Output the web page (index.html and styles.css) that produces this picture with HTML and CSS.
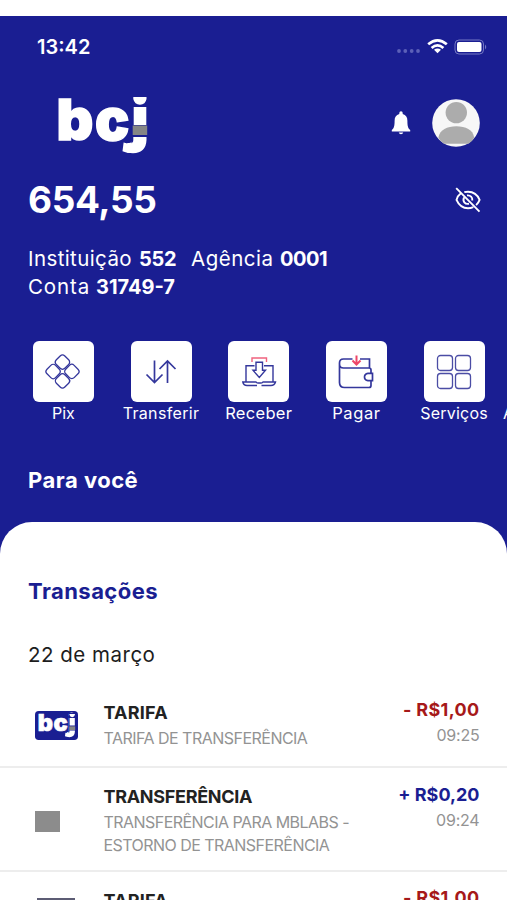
FILE: index.html
```html
<!DOCTYPE html>
<html lang="pt-BR">
<head>
<meta charset="utf-8">
<meta name="viewport" content="width=device-width, initial-scale=1">
<title>bcj</title>
<link rel="stylesheet" href="styles.css">
</head>
<body>
<main class="screen">
  <section class="hero">
    <div class="status">
      <span class="clock">13:42</span>
      <svg class="signals" width="92" height="18" viewBox="0 0 92 18" aria-hidden="true">
        <g fill="#5c60b8"><circle cx="4" cy="13" r="1.900"/><circle cx="10.300" cy="13" r="1.900"/><circle cx="16.700" cy="13" r="1.900"/><circle cx="23" cy="13" r="1.900"/></g>
        <g fill="none" stroke="#fff" stroke-width="2.700"><path d="M33.200 6.300Q42.500-1.700 51.800 6.300"/><path d="M36.600 9.900Q42.500 4.700 48.400 9.900"/></g>
        <path d="M39 11.800Q42.500 9.200 46 11.800L42.500 15.300z" fill="#fff"/>
        <rect x="60" y="2" width="28.500" height="14" rx="4" fill="none" stroke="#7478c4"/>
        <rect x="62" y="4" width="24.500" height="10" rx="2" fill="#fff"/>
        <path d="M90 6.500q2.500 2.500 0 5z" fill="#7478c4"/>
      </svg>
    </div>
    <div class="brand">
      <svg class="logo" width="100" height="70" viewBox="0 0 100 70">
        <text class="logo-text" y="51.500"><tspan x="6.500">b</tspan><tspan x="45">c</tspan><tspan x="80">j</tspan></text>
        <path d="M81.500 5H100V66H81.500z" fill="#1a1e92"/>
        <path d="M83.300 9H96.500V11Q95.500 16.500 90 16.800 84.500 16.500 83.300 11zM83.700 19H96.300V37H83.700zM83.300 49H96.500V52Q96 64.800 83 65.200 76.500 65.200 72.500 63.300L73.600 54.500Q77 55.800 79.800 55.600 83.300 55.300 83.300 52z" fill="#fff"/>
        <path d="M82.700 37.500H97.200V47H82.700z" fill="#858585"/>
      </svg>
      <div class="brand-actions">
        <svg width="20" height="24" viewBox="0 0 20 24" aria-hidden="true"><path d="M8.300 3V2a1.700 1.700 0 0 1 3.400 0v1c3.300.8 4.700 3.400 4.700 6.700 0 4.600.3 7.300 2.800 9.300v1.600H.8V19c2.500-2 2.800-4.700 2.800-9.300C3.600 6.400 5 3.800 8.300 3zM7.700 21.500h4.600q-.5 1.700-2.300 1.700t-2.300-1.700z" fill="#fff"/></svg>
        <svg width="48" height="48" viewBox="0 0 48 48" aria-hidden="true"><circle cx="24" cy="24" r="23.800" fill="#f7f7f7"/><circle cx="24.300" cy="13.600" r="10.700" fill="#acacac"/><path d="M6.500 39V38C8 31 15 27.300 24.300 27.300S41 31 42 38v1Q40 43 36.500 44.800H12Q8.500 43 6.500 39z" fill="#acacac"/></svg>
      </div>
    </div>
    <div class="balance">
      <strong class="balance-value">654,55</strong>
      <svg width="26" height="26" viewBox="0 0 26 26" fill="none" stroke="#fff" stroke-width="1.900" aria-hidden="true"><path d="M1.200 1.200 24.500 24.700M5.600 6.600Q2.500 9 1.500 12.900C4 18.500 8 21.300 13 21.300q2.600 0 5.300-1.100M9.300 5.200q1.700-.5 3.700-.5c5.500 0 9.500 3 11.600 8.100q-1.200 3.200-3.500 5.300M9 10.500c-1.700 3.800.9 7 5 6.300M12 8.400c3.500-.5 5.700 2 5.300 5.100"/></svg>
    </div>
    <div class="account">
      <div class="account-line"><span class="lbl-inst">Instituição</span><b class="val-inst">552</b><span class="lbl-ag">Agência</span><b class="val-ag">0001</b></div>
      <div class="account-line"><span class="lbl-conta">Conta</span><b class="val-conta">31749-7</b></div>
    </div>
    <nav class="actions">
      <div class="action"><span class="tile"><svg width="38" height="38" viewBox="0 0 38 38" fill="none" stroke="#34379c" stroke-width="1.300"><g transform="translate(18.500 18.500) rotate(45)"><rect x="-12.600" y="-12.600" width="12" height="12" rx="3.300"/><rect x=".6" y="-12.600" width="12" height="12" rx="3.300"/><rect x="-12.600" y=".6" width="12" height="12" rx="3.300"/><rect x=".6" y=".6" width="12" height="12" rx="3.300"/></g></svg></span><span class="action-label">Pix</span></div>
      <div class="action"><span class="tile"><svg width="38" height="38" viewBox="0 0 38 38" fill="none" stroke="#34379c" stroke-width="1.700"><path d="M12.500 7.500V29.500M4.500 21.500 12.500 29.500 20.500 21.500M25.500 30V8M17.500 16 25.500 8 33.500 16"/></svg></span><span class="action-label l-transfer">Transferir</span></div>
      <div class="action"><span class="tile"><svg width="38" height="38" viewBox="0 0 38 38" fill="none" stroke="#34379c" stroke-width="1.400"><path d="M12 9V5H26.500V9" stroke="#f0637f"/><path d="M14.500 12.700H6V29M24 12.700H33V29M16 9.200H22.500V17.300H25.500L19.300 24.500 13 17.300H16zM17 32.500H7Q3.500 32.500 2.800 29H16Q16.500 30 18 30H21Q22.500 30 23 29H35.500Q34.500 32.500 31 32.500H21.500"/></svg></span><span class="action-label l-receive">Receber</span></div>
      <div class="action"><span class="tile"><svg width="38" height="38" viewBox="0 0 38 38" fill="none" stroke="#34379c" stroke-width="1.700"><path d="M15.500 6H6.500Q2.500 6 2.500 10V29.500Q2.500 34.500 7.500 34.500H32Q34 34.500 34 32.500V27.700M34 20.300V17Q34 15 32 15H6.500Q2.500 15 2.500 11M23 6H32.500V15M35.500 20.300H31Q27.500 20.800 27.500 24T31 27.700H35.500z"/><path d="M19.500 2.500V11M15.500 7.500 19.500 11.500 23.500 7.500" stroke="#ee4668" stroke-width="2"/></svg></span><span class="action-label l-pay">Pagar</span></div>
      <div class="action"><span class="tile"><svg width="38" height="38" viewBox="0 0 38 38" fill="none" stroke="#4b4da5" stroke-width="1.300"><rect x="2.500" y="2.500" width="15" height="15" rx="3"/><rect x="20.500" y="2.500" width="15" height="15" rx="3"/><rect x="2.500" y="20.500" width="15" height="15" rx="3"/><rect x="20.500" y="20.500" width="15" height="15" rx="3"/></svg></span><span class="action-label l-services">Serviços</span></div>
      <div class="action action-next"><span class="action-label">A</span></div>
    </nav>
    <h2 class="for-you">Para você</h2>
  </section>
  <section class="sheet">
    <h2 class="sheet-title">Transações</h2>
    <p class="date">22 de março</p>
    <article class="row">
      <span class="row-icon"><svg class="logo" width="43" height="29" viewBox="0 2 104 70.100">
        <rect y="2" width="104" height="70.100" rx="9" fill="#1a1e92"/>
        <text class="logo-text" y="51.500"><tspan x="6.500">b</tspan><tspan x="45">c</tspan><tspan x="80">j</tspan></text>
        <path d="M81.500 6H100V66H81.500z" fill="#1a1e92"/>
        <path d="M83.300 9H96.500V11Q95.500 16.500 90 16.800 84.500 16.500 83.300 11zM83.700 19H96.300V37H83.700zM83.300 49H96.500V52Q96 64.800 83 65.200 76.500 65.200 72.500 63.300L73.600 54.500Q77 55.800 79.800 55.600 83.300 55.300 83.300 52z" fill="#fff"/>
        <path d="M82.700 39H97.200V48H82.700z" fill="#858585"/>
      </svg></span>
      <div class="row-body"><h3 class="t-tarifa">TARIFA</h3><p class="d-tarifa">TARIFA DE TRANSFERÊNCIA</p></div>
      <div class="row-side"><strong class="debit">- R$1,00</strong><time>09:25</time></div>
    </article>
    <article class="row row-tall">
      <span class="row-icon"><span class="placeholder"></span></span>
      <div class="row-body"><h3 class="t-transf">TRANSFERÊNCIA</h3><p class="d-para">TRANSFERÊNCIA PARA MBLABS -<br>ESTORNO DE TRANSFERÊNCIA</p></div>
      <div class="row-side"><strong class="credit">+ R$0,20</strong><time>09:24</time></div>
    </article>
    <article class="row">
      <span class="row-icon"><span class="card-thumb"></span></span>
      <div class="row-body"><h3 class="t-tarifa">TARIFA</h3></div>
      <div class="row-side"><strong class="debit">- R$1,00</strong></div>
    </article>
  </section>
</main>
</body>
</html>
```
FILE: styles.css
```css
* { box-sizing: border-box; }
body { margin: 0; background: #fff; }
h2, h3, p { margin: 0; }
svg { display: block; }
.screen {
  height: 900px;
  padding-top: 16px;
  overflow: hidden;
  background: linear-gradient(#fff 16px, #1a1e92 16px);
  font-family: Inter, "Liberation Sans", sans-serif;
  color: #fff;
  white-space: nowrap;
}
.logo { overflow: visible; }
.logo-text { font: 900 57px Inter, sans-serif; fill: #fff; stroke: #fff; stroke-width: 1.5px; }
.hero { height: 506px; padding: 16px 0 0 28px; }
.status { display: flex; align-items: center; justify-content: space-between; height: 30px; padding: 0 20px 0 9px; }
.clock { font-size: 20px; font-weight: 600; }
.brand { display: flex; align-items: center; justify-content: space-between; height: 70px; margin-top: 26px; padding: 0 27px 0 22px; }
.brand-actions { display: flex; align-items: center; gap: 21px; }
.balance { display: flex; align-items: center; justify-content: space-between; height: 40px; margin-top: 22px; padding-right: 26px; }
.balance-value { font-size: 37px; font-weight: 700; line-height: 40px; letter-spacing: -0.4px; }
.account { margin-top: 24.5px; font-size: 20px; }
.account-line { display: flex; height: 28.5px; line-height: 28.5px; }
.account-line span { font-size: 20.5px; }
.account-line b { margin-left: 7px; }
.lbl-inst { width: 104px; letter-spacing: 0.4px; }
.val-inst { width: 37px; letter-spacing: -0.3px; }
.lbl-ag { width: 82px; margin-left: 15px; letter-spacing: 0.5px; }
.val-ag { letter-spacing: -0.5px; }
.lbl-conta { width: 61px; letter-spacing: 0.9px; }
.actions { display: flex; margin: 39.5px 0 0 -13.5px; height: 83px; }
.action { display: flex; flex: 0 0 97.7px; flex-direction: column; align-items: center; }
.action-next { align-items: flex-start; padding-top: 61px; }
.tile { display: flex; align-items: center; justify-content: center; width: 61px; height: 61px; border-radius: 6px; background: #fff; }
.action-label { font-size: 16px; line-height: 22px; }
.l-transfer { letter-spacing: 0.35px; }
.l-receive { font-size: 16.5px; letter-spacing: 0.3px; }
.l-pay { font-size: 16.5px; letter-spacing: 0.6px; }
.l-services { letter-spacing: 0.2px; }
.for-you { margin-top: 42px; font-size: 22px; line-height: 29px; letter-spacing: 0.5px; }
.sheet { height: 400px; padding-top: 55px; border-radius: 32px 32px 0 0; background: #fff; }
.sheet-title { padding-left: 28px; color: #1a1e92; font-size: 22px; line-height: 29px; letter-spacing: 0.45px; }
.date { margin-top: 35px; padding-left: 28px; color: #1d1d1d; font-size: 20.5px; line-height: 28px; letter-spacing: 0.5px; }
.row { display: flex; height: 84px; border-bottom: 2px solid #ededed; padding: 0 27.5px 0 34.5px; }
.date + .row { margin-top: 15px; }
.row-tall { height: 104px; }
.row-icon { display: flex; align-items: center; flex: 0 0 69px; }
.row-tall .row-icon { padding-top: 4px; }
.row-body { flex: 1; padding-top: 16.5px; }
.row-body h3 { color: #222; font-size: 18px; line-height: 24px; }
.row-body p { margin-top: 2px; color: #939393; font-size: 16px; line-height: 23px; }
.t-tarifa { letter-spacing: 0.2px; }
.t-transf { letter-spacing: -0.3px; }
.d-tarifa { letter-spacing: -0.52px; }
.d-para { letter-spacing: -0.54px; }
.row-side { display: flex; flex-direction: column; align-items: flex-end; padding-top: 14px; }
.row-tall .row-side { padding-top: 15px; }
.row-side strong { font-size: 18px; line-height: 24px; }
.row-side time { margin-top: 2px; color: #939393; font-size: 16px; line-height: 23px; letter-spacing: -0.2px; }
.debit { color: #a61919; letter-spacing: 0.35px; }
.credit { color: #1a1e92; }
.placeholder { width: 25px; height: 21px; background: #8c8c8c; }
.card-thumb { width: 38px; height: 31px; margin-left: 2px; background: #5c5c74; }
```
